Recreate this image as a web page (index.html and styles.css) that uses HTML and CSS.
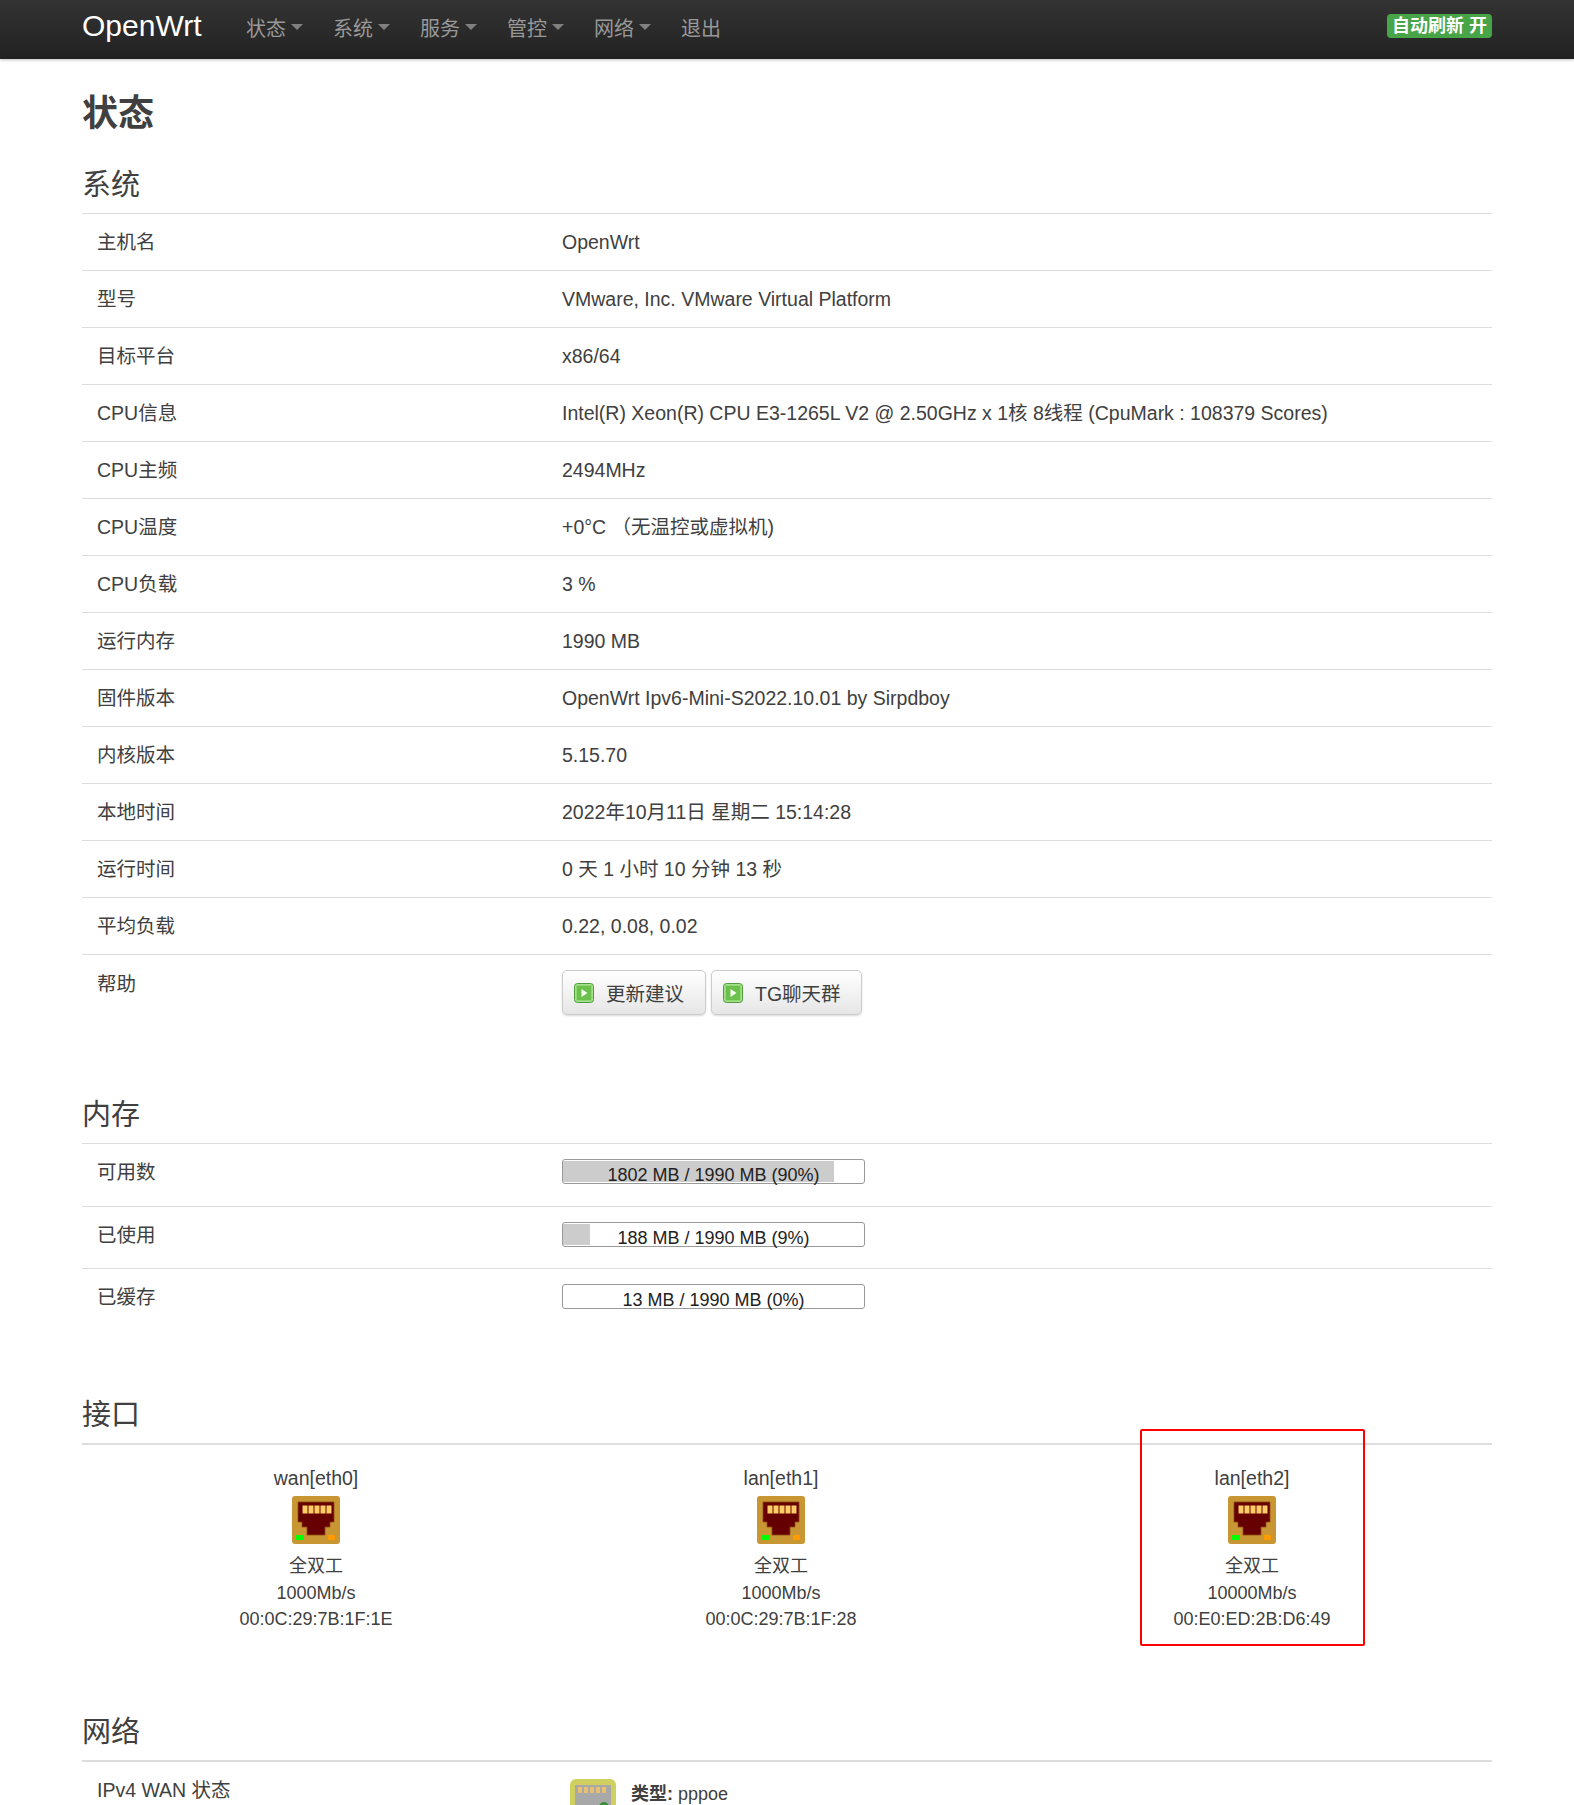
FILE: index.html
```html
<!DOCTYPE html>
<html lang="zh-CN">
<head>
<meta charset="utf-8">
<title>OpenWrt - 状态</title>
<link rel="stylesheet" href="styles.css">
</head>
<body>
<div class="page">
<svg class="defs" width="0" height="0" aria-hidden="true">
  <symbol id="eth" viewBox="0 0 48 48">
    <rect width="48" height="48" rx="3" fill="#c89632"/>
    <path d="M6 6H42V26H38V31H33V39H15V31H10V26H6Z" fill="#660000" stroke="#8f4a14" stroke-width="0.800"/>
    <g fill="#ffcc66">
      <rect x="10.500" y="9.500" width="5" height="8"/>
      <rect x="16.500" y="9.500" width="5" height="8"/>
      <rect x="22.500" y="9.500" width="5" height="8"/>
      <rect x="28.500" y="9.500" width="5" height="8"/>
      <rect x="34.500" y="9.500" width="5" height="8"/>
    </g>
    <rect x="4" y="39" width="8" height="5" fill="#00ff00"/>
    <rect x="36" y="39" width="7" height="5" fill="#ff9900"/>
  </symbol>
  <symbol id="play" viewBox="0 0 20 20">
    <rect x="0.500" y="0.500" width="19" height="19" rx="3" fill="#a6e08c" stroke="#4f9a3f"/>
    <rect x="2.500" y="2.500" width="15" height="15" rx="1" fill="#6cc04e" stroke="#8fd872"/>
    <path d="M7.500 6L13.500 10L7.500 14Z" fill="#f4fff0"/>
  </symbol>
</svg>

<header class="navbar">
  <a class="brand">OpenWrt</a>
  <nav class="menu">
    <a class="menu-item">状态<i class="caret"></i></a>
    <a class="menu-item">系统<i class="caret"></i></a>
    <a class="menu-item">服务<i class="caret"></i></a>
    <a class="menu-item">管控<i class="caret"></i></a>
    <a class="menu-item">网络<i class="caret"></i></a>
    <a class="menu-item">退出</a>
  </nav>
  <span class="refresh">自动刷新 开</span>
</header>

<main class="content">
  <h2 class="page-title">状态</h2>

  <section class="system">
    <h3 class="section-title">系统</h3>
    <div class="row"><div class="label">主机名</div><div class="value">OpenWrt</div></div>
    <div class="row"><div class="label">型号</div><div class="value">VMware, Inc. VMware Virtual Platform</div></div>
    <div class="row"><div class="label">目标平台</div><div class="value">x86/64</div></div>
    <div class="row"><div class="label">CPU信息</div><div class="value">Intel(R) Xeon(R) CPU E3-1265L V2 @ 2.50GHz x 1核 8线程 (CpuMark : 108379 Scores)</div></div>
    <div class="row"><div class="label">CPU主频</div><div class="value">2494MHz</div></div>
    <div class="row"><div class="label">CPU温度</div><div class="value">+0°C （无温控或虚拟机)</div></div>
    <div class="row"><div class="label">CPU负载</div><div class="value">3 %</div></div>
    <div class="row"><div class="label">运行内存</div><div class="value">1990 MB</div></div>
    <div class="row"><div class="label">固件版本</div><div class="value">OpenWrt Ipv6-Mini-S2022.10.01 by Sirpdboy</div></div>
    <div class="row"><div class="label">内核版本</div><div class="value">5.15.70</div></div>
    <div class="row"><div class="label">本地时间</div><div class="value">2022年10月11日 星期二 15:14:28</div></div>
    <div class="row"><div class="label">运行时间</div><div class="value">0 天 1 小时 10 分钟 13 秒</div></div>
    <div class="row"><div class="label">平均负载</div><div class="value">0.22, 0.08, 0.02</div></div>
    <div class="row help">
      <div class="label">帮助</div>
      <div class="buttons">
        <a class="btn"><svg class="btn-icon"><use href="#play"/></svg>更新建议</a>
        <a class="btn"><svg class="btn-icon"><use href="#play"/></svg>TG聊天群</a>
      </div>
    </div>
  </section>

  <section class="memory">
    <h3 class="section-title">内存</h3>
    <div class="row mem"><div class="label">可用数</div><div class="bar"><div class="fill" style="width:90%"></div><span class="bar-text">1802 MB / 1990 MB (90%)</span></div></div>
    <div class="row mem"><div class="label">已使用</div><div class="bar"><div class="fill" style="width:9%"></div><span class="bar-text">188 MB / 1990 MB (9%)</span></div></div>
    <div class="row mem last"><div class="label">已缓存</div><div class="bar"><div class="fill" style="width:0%"></div><span class="bar-text">13 MB / 1990 MB (0%)</span></div></div>
  </section>

  <section class="ports-section">
    <h3 class="section-title thick">接口</h3>
    <div class="ports">
      <div class="port">
        <div class="port-name">wan[eth0]</div>
        <svg class="port-icon"><use href="#eth"/></svg>
        <div>全双工</div><div>1000Mb/s</div><div>00:0C:29:7B:1F:1E</div>
      </div>
      <div class="port">
        <div class="port-name">lan[eth1]</div>
        <svg class="port-icon"><use href="#eth"/></svg>
        <div>全双工</div><div>1000Mb/s</div><div>00:0C:29:7B:1F:28</div>
      </div>
      <div class="port">
        <div class="port-name">lan[eth2]</div>
        <svg class="port-icon"><use href="#eth"/></svg>
        <div>全双工</div><div>10000Mb/s</div><div>00:E0:ED:2B:D6:49</div>
      </div>
    </div>
    <div class="highlight"></div>
  </section>

  <section class="network">
    <h3 class="section-title thick">网络</h3>
    <div class="net-row">
      <div class="label">IPv4 WAN 状态</div>
      <div class="net-info">
        <svg class="net-icon" viewBox="0 0 46 48">
          <rect width="46" height="48" rx="6" fill="#cfd060"/>
          <path d="M5 6H41V26H37V31H32V39H14V31H9V26H5Z" fill="#a8a8a8"/>
          <g fill="#e8c070">
            <rect x="8" y="8" width="4" height="6"/>
            <rect x="14" y="8" width="4" height="6"/>
            <rect x="20" y="8" width="4" height="6"/>
            <rect x="26" y="8" width="4" height="6"/>
            <rect x="32" y="8" width="4" height="6"/>
          </g>
          <circle cx="34" cy="28" r="5" fill="#3a8f3a"/>
        </svg>
        <div class="net-text"><strong>类型:</strong> pppoe</div>
      </div>
    </div>
  </section>
</main>
</div>
</body>
</html>
```

FILE: styles.css
```css
* { box-sizing: border-box; }
html, body { margin: 0; padding: 0; }
body {
  font-family: "Liberation Sans", "Noto Sans CJK SC", sans-serif;
  font-size: 19.500px;
  color: #404040;
  background: #fff;
}
.page { height: 1805px; overflow: hidden; }
.defs { position: absolute; }

.navbar {
  display: flex;
  align-items: flex-start;
  height: 59px;
  padding: 0 82px;
  background: linear-gradient(#333333, #222222);
  box-shadow: 0 1px 3px rgba(0, 0, 0, 0.25);
}
.brand { margin-top: 8px; width: 164px; font-size: 30px; line-height: 36px; color: #fff; }
.menu { display: flex; flex: 1; margin-top: 12px; }
.menu-item {
  display: flex;
  align-items: center;
  width: 87px;
  height: 30px;
  font-size: 20px;
  color: #999;
}
.caret {
  width: 0;
  height: 0;
  margin-left: 5px;
  border-left: 6px solid transparent;
  border-right: 6px solid transparent;
  border-top: 6px solid #808080;
}
.refresh {
  width: 105px;
  height: 24px;
  margin-top: 14px;
  background: #47a447;
  border-radius: 4px;
  color: #fff;
  font-size: 18px;
  font-weight: 700;
  line-height: 24px;
  text-align: center;
  white-space: nowrap;
}

.content { padding: 0 82px; }
.page-title {
  margin: 35px 0 0;
  font-size: 36px;
  line-height: 40px;
  font-weight: 700;
}
.section-title {
  margin: 34px 0 0;
  padding-bottom: 11px;
  font-size: 29px;
  line-height: 34px;
  font-weight: 400;
  border-bottom: 1px solid #ddd;
}
.section-title.thick { border-bottom-width: 2px; }

.row {
  display: grid;
  grid-template-columns: 480px 1fr;
  align-items: center;
  height: 57px;
  border-bottom: 1px solid #ddd;
}
.label { padding-left: 15px; line-height: 26px; }
.value { line-height: 26px; }

.help { height: 143px; align-items: start; border-bottom: 0; padding-top: 15px; }
.help .label { margin-top: 1px; }
.buttons { display: flex; gap: 5.500px; }
.btn {
  display: flex;
  align-items: center;
  height: 45px;
  padding: 0 20.500px 0 11px;
  border: 1px solid #ccc;
  border-radius: 5px;
  background: linear-gradient(#ffffff, #e6e6e6);
  box-shadow: 0 1px 2px rgba(0, 0, 0, 0.15);
}
.btn-icon { width: 20px; height: 20px; margin-right: 12px; }

.memory .section-title { margin-top: 0; }
.mem { height: 62.500px; align-items: start; padding-top: 15px; }
.mem.last { border-bottom: 0; }
.bar {
  position: relative;
  width: 303px;
  height: 25px;
  border: 1px solid #999;
  border-radius: 3px;
  padding: 1px 0;
  background: #fff;
}
.fill { height: 100%; background: #ccc; }
.bar-text {
  position: absolute;
  inset: 0;
  text-align: center;
  color: #222;
  font-size: 18px;
  line-height: 30px;
}

.ports-section { position: relative; }
.ports-section .section-title { margin-top: 66px; }
.ports {
  display: grid;
  grid-template-columns: 468px 462px 480px;
  padding-top: 20px;
}
.port { text-align: center; font-size: 18px; line-height: 26.500px; }
.port-name { font-size: 19.500px; }
.port-icon { display: block; width: 48px; height: 48px; margin: 5px auto 9px; }
.highlight {
  position: absolute;
  left: 1058px;
  top: 31px;
  width: 225px;
  height: 217px;
  border: 2px solid #f00;
  border-radius: 2px;
}

.network .section-title { margin-top: 82px; }
.net-row {
  display: grid;
  grid-template-columns: 488px 1fr;
  padding-top: 12px;
}
.net-row .label { margin-top: 3.500px; }
.net-info { display: flex; gap: 15px; font-size: 18px; }
.net-icon { width: 46px; height: 48px; margin-top: 5px; flex: none; }
.net-text { margin-top: 5px; }
```
